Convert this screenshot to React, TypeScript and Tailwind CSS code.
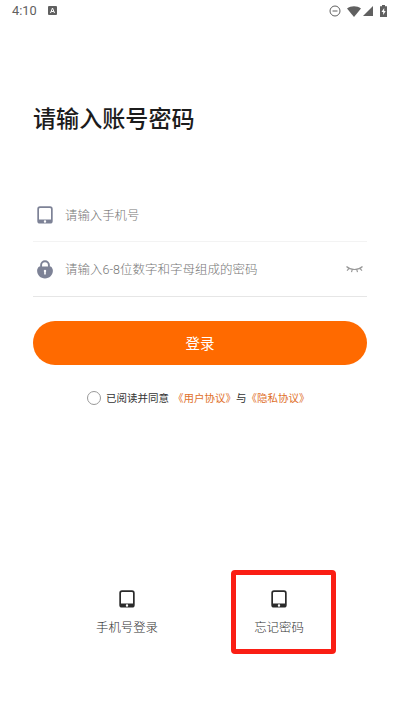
interface IconProps {
    className?: string;
}

function TabletIcon({ className }: IconProps) {
    return (
        <svg className={className} viewBox="0 0 16 18" aria-hidden="true">
            <path
                fill="currentColor"
                fillRule="evenodd"
                d="M3 .2h10a2.700 2.700 0 0 1 2.700 2.700v12a2.700 2.700 0 0 1-2.700 2.700H3A2.700 2.700 0 0 1 .3 14.900V2.900A2.700 2.700 0 0 1 3 .2zM3.200 1.900a1.200 1.200 0 0 0-1.200 1.200v10.300h12V3.100a1.200 1.200 0 0 0-1.200-1.200zM8 14.300a1.200 1.200 0 1 0 0 2.400 1.200 1.200 0 0 0 0-2.400z"
            />
        </svg>
    );
}

function LockIcon({ className }: IconProps) {
    return (
        <svg className={className} viewBox="0 0 16 19" aria-hidden="true">
            <path d="M4.100 8V5.100a3.900 3.900 0 0 1 7.800 0V8" fill="none" stroke="currentColor" strokeWidth="1.900" />
            <path
                fill="currentColor"
                fillRule="evenodd"
                d="M2.200 6.500h11.600c1.300 1 2.100 2.600 2.100 4.300C15.900 15.200 12.400 18.500 8 18.500S.1 15.200.1 10.800C.1 9.100.9 7.500 2.200 6.500zM8 9.800a1.200 1.200 0 0 0-.8 2.100v2.500h1.600v-2.500A1.200 1.200 0 0 0 8 9.800z"
            />
        </svg>
    );
}

function ClosedEyeIcon() {
    return (
        <svg
            className="h-[8px] w-[17px] text-[#999]"
            viewBox="0 0 17 8"
            fill="none"
            stroke="currentColor"
            strokeWidth="1.2"
            aria-hidden="true"
        >
            <path d="M.5 1.500c2.200 2 4.800 3 8 3s5.800-1 8-3M3.200 3.300L1 5.600M6.300 4.300l-.8 2.800M10.700 4.300l.8 2.800M13.800 3.300L16 5.600" />
        </svg>
    );
}

function StatusBar() {
    return (
        <div className="flex h-[22px] items-center justify-between px-[12px] text-[#606060]">
            <div className="flex items-center gap-[11px]">
                <span className="mt-px font-[Roboto,sans-serif] text-[12.8px] leading-none">4:10</span>
                <svg className="h-[9px] w-[9px]" viewBox="0 0 9 9" aria-hidden="true">
                    <rect width="9" height="9" rx="1" fill="currentColor" />
                    <path d="M2.500 7l2-5 2 5M3.200 5.500h2.600" fill="none" stroke="#fff" strokeWidth="1" />
                </svg>
            </div>
            <div className="flex items-center">
                <svg className="h-[12px] w-[12px]" viewBox="0 0 12 12" fill="none" stroke="currentColor" aria-hidden="true">
                    <circle cx="6" cy="6" r="5" />
                    <path d="M3.500 6h5" />
                </svg>
                <svg className="ml-[6px] h-[11px] w-[14px]" viewBox="0 0 14 11" fill="currentColor" aria-hidden="true">
                    <path d="M0 2.500C4 -.5 10 -.5 14 2.500L7 11z" />
                </svg>
                <svg className="ml-[2px] h-[10px] w-[10px]" viewBox="0 0 10 10" fill="currentColor" aria-hidden="true">
                    <path d="M10 0v10H0z" />
                </svg>
                <svg className="mr-[1px] ml-[7px] h-[12px] w-[7px]" viewBox="0 0 7 12" aria-hidden="true">
                    <path d="M2 0h3v1.200h2V12H0V1.200h2z" fill="currentColor" />
                    <path d="M4.200 3L1.500 7h1.700v3l2.500-4H4.200z" fill="#fff" />
                </svg>
            </div>
        </div>
    );
}

export default function App() {
    return (
        <div className="flex h-[711px] w-[400px] flex-col bg-white font-['Noto_Sans_CJK_SC',sans-serif]">
            <StatusBar />

            <main className="flex flex-col px-[33px]">
                <h1 className="mt-[78px] text-[23.1px] leading-[34px] font-medium text-[#1c1c1c]">请输入账号密码</h1>

                <div className="mt-[54px] flex h-[54px] items-center border-b border-[#f3f3f3]">
                    <TabletIcon className="ml-[4px] h-[18px] w-[16px] text-[#7d8296]" />
                    <span className="mt-px ml-[12px] text-[12.4px] leading-none font-light text-[#777]">请输入手机号</span>
                </div>
                <div className="flex h-[55px] items-center border-b border-[#e6e6e6]">
                    <LockIcon className="ml-[4px] h-[19px] w-[16px] text-[#7d8296]" />
                    <span className="mt-[3px] ml-[12px] font-[Roboto,'Noto_Sans_CJK_SC',sans-serif] text-[12.5px] leading-none font-light text-[#777]">
                        请输入6-8位数字和字母组成的密码
                    </span>
                    <span className="mr-[4px] ml-auto">
                        <ClosedEyeIcon />
                    </span>
                </div>

                <button className="mt-[24px] h-[44px] rounded-full bg-[#ff6a00] text-[14.5px] text-white">登录</button>

                <div className="mt-[25px] flex h-[16px] items-center pl-[54px] text-[10.5px] whitespace-nowrap text-[#333]">
                    <span className="mr-[5px] h-[14px] w-[14px] rounded-full border border-[#999]" />
                    <span>已阅读并同意</span>
                    <span className="ml-[4px] text-[#e0702a]">《用户协议》</span>
                    <span>与</span>
                    <span className="text-[#e0702a]">《隐私协议》</span>
                </div>
            </main>

            <footer className="mt-[164px] flex pl-[75px] text-[12.4px] leading-[18px] font-light text-[#333]">
                <div className="flex h-[84px] w-[104px] flex-col items-center pt-[20px]">
                    <TabletIcon className="h-[18px] w-[16px] text-[#2b2b2b]" />
                    <span className="mt-[10px]">手机号登录</span>
                </div>
                <div className="ml-[52px] flex h-[84px] w-[105px] flex-col items-center rounded-[4px] border-[5px] border-[#fa1e14] pt-[15px] pr-[9px]">
                    <TabletIcon className="h-[18px] w-[16px] text-[#2b2b2b]" />
                    <span className="mt-[10px]">忘记密码</span>
                </div>
            </footer>
        </div>
    );
}
